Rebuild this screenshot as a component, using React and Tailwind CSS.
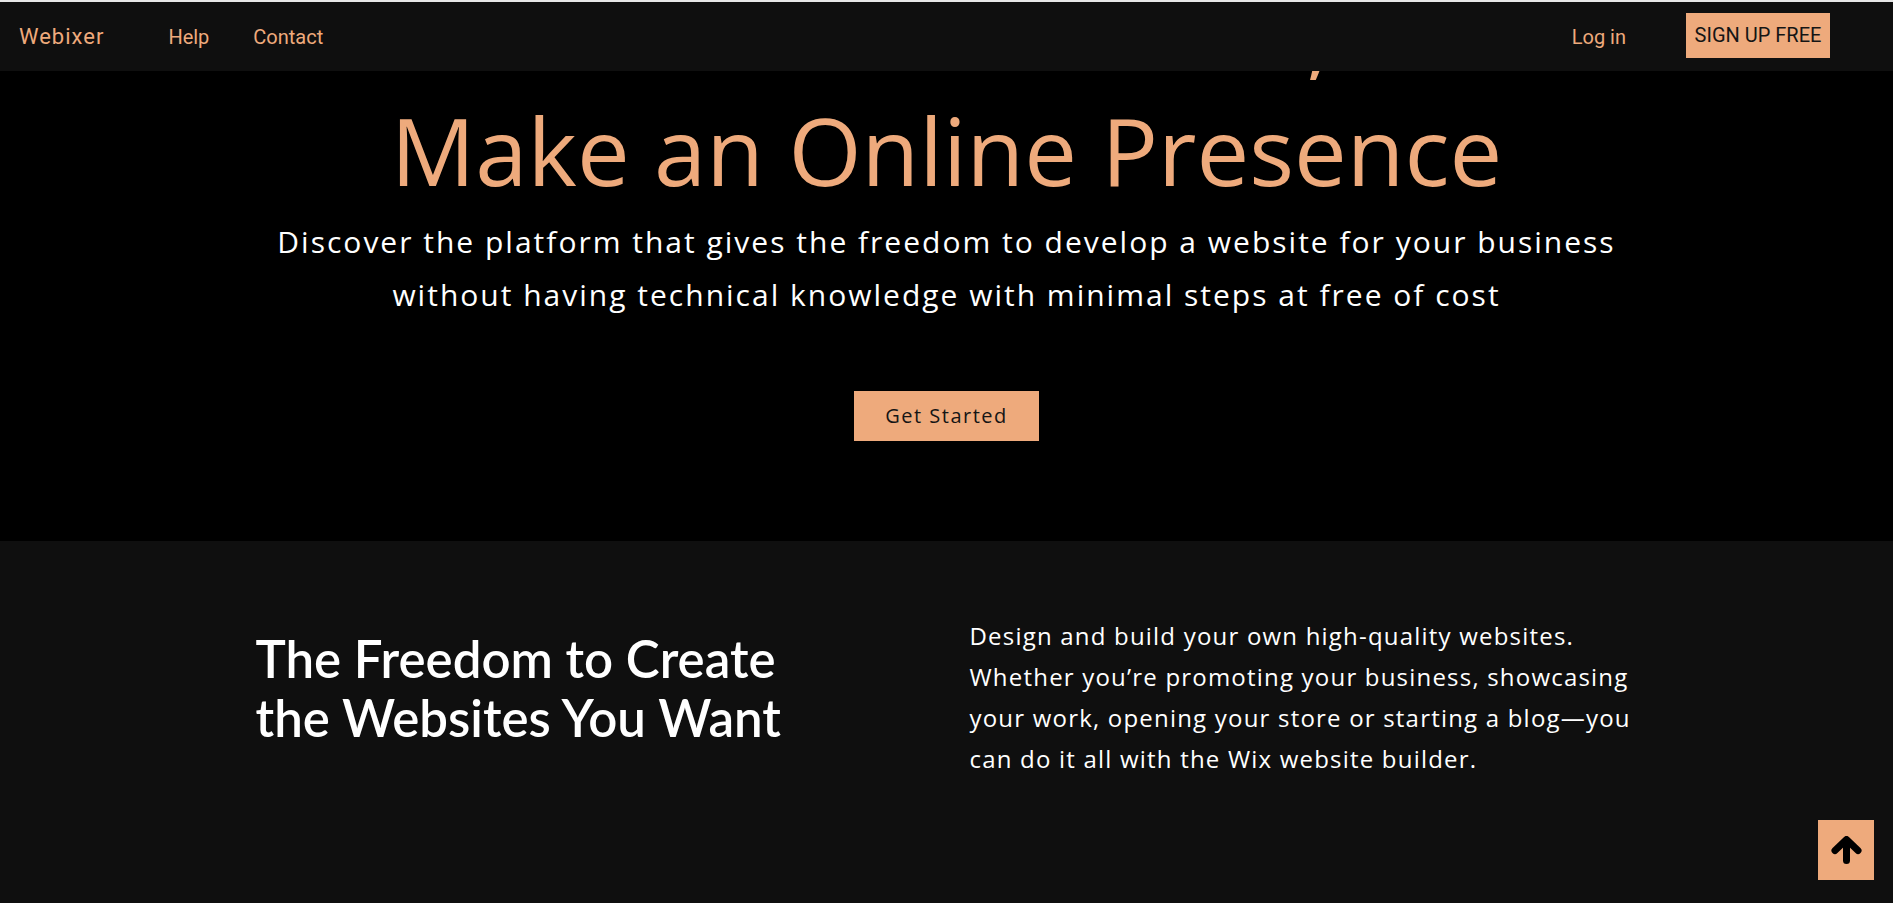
import { useState } from "react";

const Navbar = () => {
  return (
    <nav className="fixed top-0 left-0 right-0 z-10 h-[71px] bg-[#0f0f0f] border-t-2 border-[#e6e6e6] flex items-center px-[19px] font-['Roboto',sans-serif]">
      <a className="text-[22px] tracking-[1px] text-[#eeaa7c]">Webixer</a>
      <a className="ml-[64px] text-[20px] text-[#eeaa7c]">Help</a>
      <a className="ml-[44px] text-[20px] text-[#eeaa7c]">Contact</a>

      <div className="ml-auto flex items-center mr-[44px]">
        <a className="text-[20px] text-[#eeaa7c]">Log in</a>
        <button className="ml-[60px] h-[45px] w-[144px] -mt-[3px] bg-[#eeaa7c] text-[20px] text-[#151515] uppercase">
          Sign up free
        </button>
      </div>
    </nav>
  );
};

const Hero = () => {
  return (
    <section className="bg-black flex flex-col items-center text-center pb-[100px]">
      <h1 className="-mt-[26px] font-['Open_Sans',sans-serif] font-normal text-[94px] leading-[1.25] text-[#eeaa7c]">
        Build Your Brand,
        <br />
        Make an Online Presence
      </h1>

      <p className="mt-[6px] font-['Open_Sans',sans-serif] text-[30px] leading-[53px] tracking-[2px] text-white">
        Discover the platform that gives the freedom to develop a website for your business
        <br />
        without having technical knowledge with minimal steps at free of cost
      </p>

      <button className="mt-[70px] h-[50px] w-[185px] bg-[#eeaa7c] text-[20px] tracking-[1.5px] text-[#151515] font-['Open_Sans',sans-serif]">
        Get Started
      </button>
    </section>
  );
};

const Features = () => {
  return (
    <section className="bg-[#0f0f0f] pt-[74px] pb-[140px]">
      <div className="w-[1406px] mx-auto pl-[12px] grid grid-cols-[680px_680px] gap-x-[34px]">
        <h2 className="mt-[14px] font-['Lato',sans-serif] font-semibold text-[51px] leading-[59px] text-white">
          The Freedom to Create
          <br />
          the Websites You Want
        </h2>

        <p className="font-['Open_Sans',sans-serif] text-[24px] leading-[41px] tracking-[1.2px] text-white">
          Design and build your own high-quality websites.
          <br />
          Whether you’re promoting your business, showcasing
          <br />
          your work, opening your store or starting a blog—you
          <br />
          can do it all with the Wix website builder.
        </p>
      </div>
    </section>
  );
};

const ScrollTop = () => {
  const [hover, setHover] = useState(false);

  return (
    <button
      onMouseEnter={() => setHover(true)}
      onMouseLeave={() => setHover(false)}
      onClick={() => window.scrollTo({ top: 0, behavior: "smooth" })}
      className={`fixed right-[19px] bottom-[23px] w-[56px] h-[60px] flex items-center justify-center ${
        hover ? "bg-[#f3b88f]" : "bg-[#eeaa7c]"
      }`}
    >
      <svg width="31" height="28" viewBox="0 0 31 28" fill="none">
        <path
          d="M4 14.5 L15.5 3.5 L27 14.5 M15.5 4.5 V24.5"
          stroke="#000"
          strokeWidth="7"
          strokeLinecap="round"
          strokeLinejoin="round"
        />
      </svg>
    </button>
  );
};

const App = () => {
  return (
    <div className="min-h-screen bg-black overflow-hidden">
      <Navbar />
      <Hero />
      <Features />
      <ScrollTop />
    </div>
  );
};

export default App;
